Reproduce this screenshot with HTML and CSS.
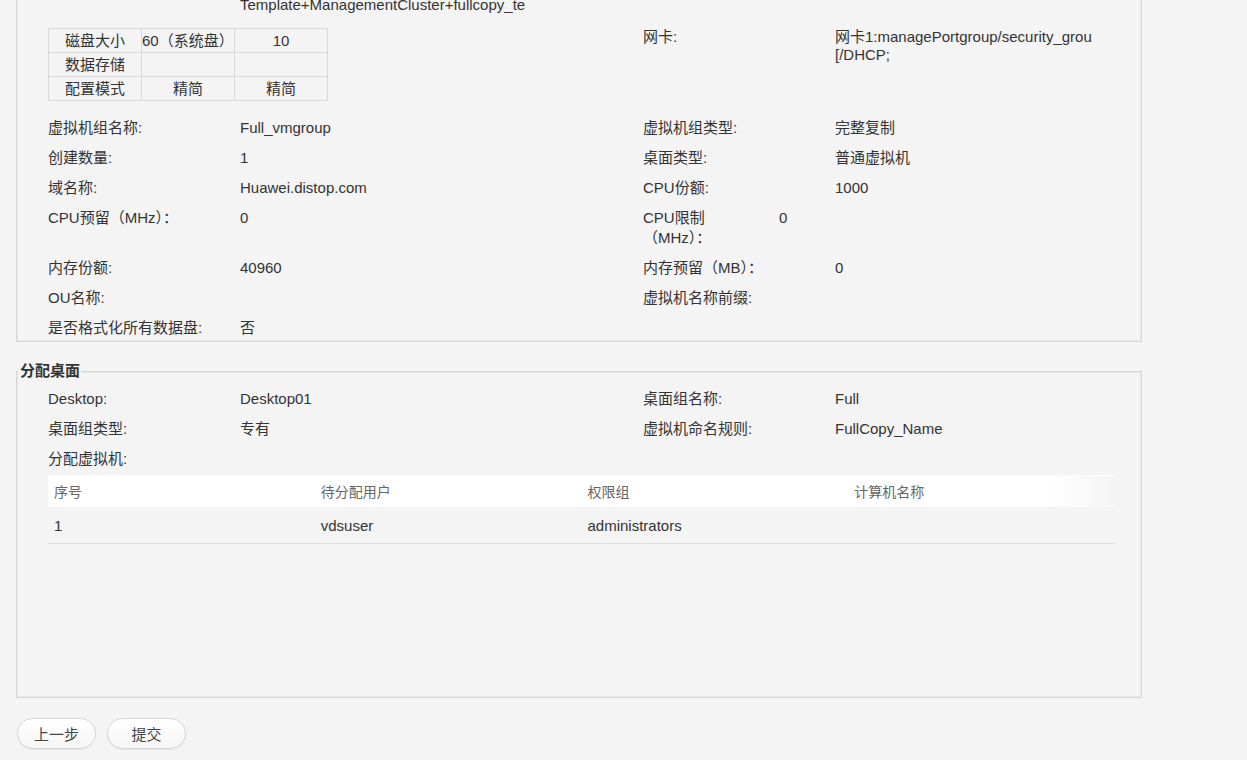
FILE: index.html
```html
<!DOCTYPE html>
<html lang="zh-CN">
<head>
<meta charset="utf-8">
<title>确认信息</title>
<link rel="stylesheet" href="styles.css">
</head>
<body>
<div class="page">
  <div class="panel top">
    <div class="row">
      <div class="half">
        <div class="lbl"></div>
        <div class="val clip-left">Template+ManagementCluster+fullcopy_template</div>
      </div>
    </div>
    <div class="row disk-row">
      <div class="half">
        <table class="disk">
          <tr><td>磁盘大小</td><td class="wide">60（系统盘）</td><td>10</td></tr>
          <tr><td>数据存储</td><td></td><td></td></tr>
          <tr><td>配置模式</td><td>精简</td><td>精简</td></tr>
        </table>
      </div>
      <div class="half right nic">
        <div class="lbl">网卡:</div>
        <div class="val">
          <div class="clip-right">网卡1:managePortgroup/security_group</div>
          <div>[/DHCP;</div>
        </div>
      </div>
    </div>
    <div class="row">
      <div class="half"><div class="lbl">虚拟机组名称:</div><div class="val">Full_vmgroup</div></div>
      <div class="half right"><div class="lbl">虚拟机组类型:</div><div class="val">完整复制</div></div>
    </div>
    <div class="row">
      <div class="half"><div class="lbl">创建数量:</div><div class="val">1</div></div>
      <div class="half right"><div class="lbl">桌面类型:</div><div class="val">普通虚拟机</div></div>
    </div>
    <div class="row">
      <div class="half"><div class="lbl">域名称:</div><div class="val">Huawei.distop.com</div></div>
      <div class="half right"><div class="lbl">CPU份额:</div><div class="val">1000</div></div>
    </div>
    <div class="row">
      <div class="half"><div class="lbl">CPU预留（MHz）：</div><div class="val">0</div></div>
      <div class="half right"><div class="lbl narrow">CPU限制（MHz）：</div><div class="val">0</div></div>
    </div>
    <div class="row">
      <div class="half"><div class="lbl">内存份额:</div><div class="val">40960</div></div>
      <div class="half right"><div class="lbl">内存预留（MB）：</div><div class="val">0</div></div>
    </div>
    <div class="row">
      <div class="half"><div class="lbl">OU名称:</div><div class="val"></div></div>
      <div class="half right"><div class="lbl">虚拟机名称前缀:</div><div class="val"></div></div>
    </div>
    <div class="row">
      <div class="half"><div class="lbl">是否格式化所有数据盘:</div><div class="val">否</div></div>
      <div class="half right"></div>
    </div>
  </div>

  <fieldset class="panel assign">
    <legend>分配桌面</legend>
    <div class="sec">
      <div class="row">
        <div class="half"><div class="lbl">Desktop:</div><div class="val">Desktop01</div></div>
        <div class="half right"><div class="lbl">桌面组名称:</div><div class="val">Full</div></div>
      </div>
      <div class="row">
        <div class="half"><div class="lbl">桌面组类型:</div><div class="val">专有</div></div>
        <div class="half right"><div class="lbl">虚拟机命名规则:</div><div class="val">FullCopy_Name</div></div>
      </div>
      <div class="row">
        <div class="half"><div class="lbl">分配虚拟机:</div></div>
      </div>
      <table class="grid">
        <thead>
          <tr><th>序号</th><th>待分配用户</th><th>权限组</th><th>计算机名称</th></tr>
        </thead>
        <tbody>
          <tr><td>1</td><td>vdsuser</td><td>administrators</td><td></td></tr>
        </tbody>
      </table>
    </div>
  </fieldset>

  <div class="actions">
    <button class="btn" type="button">上一步</button>
    <button class="btn" type="button">提交</button>
  </div>
</div>
</body>
</html>
```

FILE: styles.css
```css
html, body {
  margin: 0;
  padding: 0;
  background: #f4f4f4;
}

body {
  font-family: "Liberation Sans", "Noto Sans CJK SC", sans-serif;
  font-size: 15px;
  color: #333;
  overflow: hidden;
}

.page {
  width: 1247px;
  height: 760px;
  overflow: hidden;
}

.panel {
  box-sizing: border-box;
  width: 1126px;
  margin-left: 16px;
  border: 1px solid #d6d6d6;
  box-shadow: inset 0 0 0 1px #e9e9e9;
}

.top {
  margin-top: -40px;
  padding: 26px 31px 1px;
}

.row {
  display: flex;
  padding: 8px 0 2px;
  line-height: 20px;
}

.half {
  display: flex;
  width: 595px;
  flex: none;
}

.half.right {
  width: auto;
  flex: 1;
}

.lbl {
  width: 192px;
  flex: none;
}

.lbl.narrow {
  width: 108px;
  margin-right: 28px;
}

.val {
  flex: 1;
  min-width: 0;
}

.clip-left {
  flex: none;
  width: 285px;
  overflow: hidden;
  white-space: nowrap;
}

.clip-right {
  width: 257px;
  overflow: hidden;
  white-space: nowrap;
}

.disk-row {
  padding: 0;
  margin: 11px 0 9px;
}

.nic {
  line-height: 18px;
}

.disk {
  border-collapse: collapse;
  font-size: 15px;
  color: #333;
}

.disk td {
  width: 92px;
  height: 23px;
  padding: 0;
  line-height: 23px;
  border: 1px solid #d9d9d9;
  text-align: center;
  white-space: nowrap;
  overflow: hidden;
}

.disk td.wide {
  text-align: left;
}

.assign {
  margin-top: 19px;
  padding: 0;
  min-inline-size: 0;
}

.assign legend {
  margin-left: 1px;
  padding: 0 2px;
  font-weight: bold;
  font-size: 15px;
  line-height: 20px;
  color: #333;
  background: #f4f4f4;
}

.sec {
  padding: 0 31px 153px;
}

.grid {
  width: 1067px;
  margin-top: 4px;
  border-collapse: collapse;
  table-layout: fixed;
}

.grid th {
  height: 30px;
  padding: 0 0 0 6px;
  font-weight: normal;
  font-size: 14px;
  color: #666;
  text-align: left;
  border-top: 1px solid #fbfbfb;
  border-bottom: 1px solid #fbfbfb;
}

.grid thead tr {
  background: linear-gradient(90deg, #fff calc(100% - 66px), #f4f4f4);
}

.grid td {
  height: 36px;
  padding: 0 0 0 6px;
  font-size: 15px;
  color: #333;
  border-bottom: 1px solid #dedede;
}

.actions {
  display: flex;
  gap: 11px;
  margin: 20px 0 0 17px;
}

.btn {
  box-sizing: border-box;
  width: 79px;
  height: 31px;
  padding: 0;
  border: 1px solid #d6d6d6;
  border-radius: 16px;
  background: linear-gradient(#ffffff, #f6f6f6);
  box-shadow: 0 1px 1px rgba(0, 0, 0, 0.06);
  font-family: "Liberation Sans", "Noto Sans CJK SC", sans-serif;
  font-size: 15px;
  color: #444;
  cursor: pointer;
}
```
